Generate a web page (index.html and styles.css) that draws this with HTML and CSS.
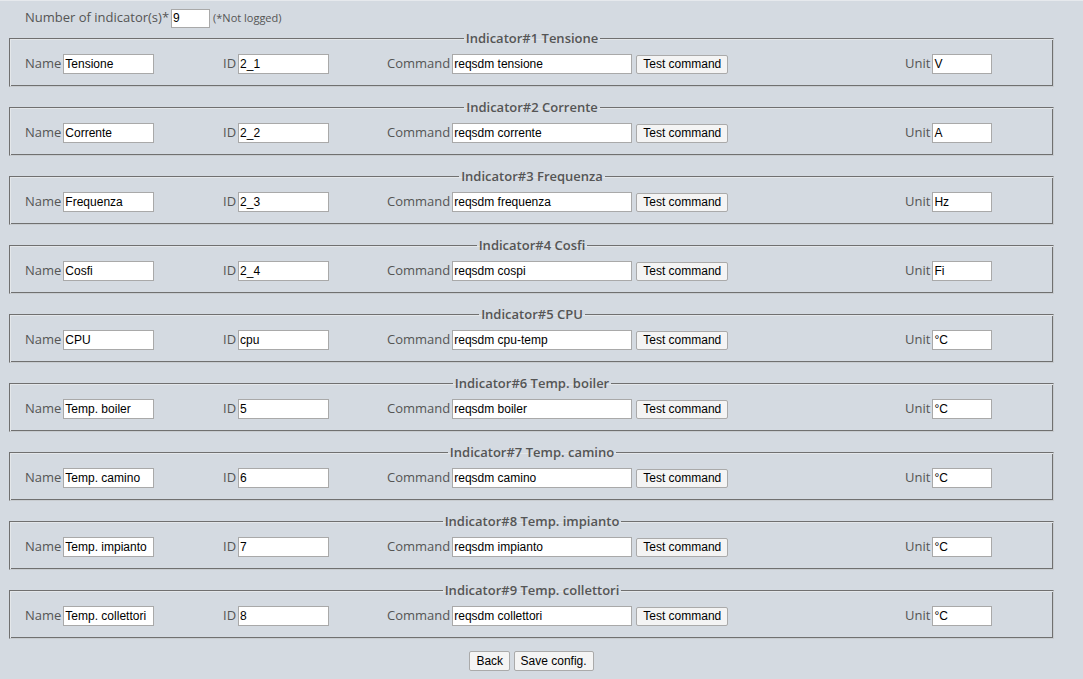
FILE: index.html
```html
<!DOCTYPE html>
<html lang="en">

<head>
  <meta charset="UTF-8">
  <title>Indicators</title>
  <link rel="stylesheet" href="styles.css">
</head>

<body>
  <div class="page">
    <div class="count-row">
      <label>Number of indicator(s)*</label>
      <input type="text" class="count-input" value="9">
      <span class="note">(*Not logged)</span>
    </div>

    <fieldset class="indicator">
      <legend>Indicator#1 Tensione</legend>
      <div class="fields">
        <div class="cell"><label>Name</label><input type="text" class="name-input" value="Tensione"></div>
        <div class="cell"><label>ID</label><input type="text" class="id-input" value="2_1"></div>
        <div class="cell"><label>Command</label><input type="text" class="cmd-input" value="reqsdm tensione"><button type="button" class="test-btn">Test command</button></div>
        <div class="cell"><label>Unit</label><input type="text" class="unit-input" value="V"></div>
      </div>
    </fieldset>

    <fieldset class="indicator">
      <legend>Indicator#2 Corrente</legend>
      <div class="fields">
        <div class="cell"><label>Name</label><input type="text" class="name-input" value="Corrente"></div>
        <div class="cell"><label>ID</label><input type="text" class="id-input" value="2_2"></div>
        <div class="cell"><label>Command</label><input type="text" class="cmd-input" value="reqsdm corrente"><button type="button" class="test-btn">Test command</button></div>
        <div class="cell"><label>Unit</label><input type="text" class="unit-input" value="A"></div>
      </div>
    </fieldset>

    <fieldset class="indicator">
      <legend>Indicator#3 Frequenza</legend>
      <div class="fields">
        <div class="cell"><label>Name</label><input type="text" class="name-input" value="Frequenza"></div>
        <div class="cell"><label>ID</label><input type="text" class="id-input" value="2_3"></div>
        <div class="cell"><label>Command</label><input type="text" class="cmd-input" value="reqsdm frequenza"><button type="button" class="test-btn">Test command</button></div>
        <div class="cell"><label>Unit</label><input type="text" class="unit-input" value="Hz"></div>
      </div>
    </fieldset>

    <fieldset class="indicator">
      <legend>Indicator#4 Cosfi</legend>
      <div class="fields">
        <div class="cell"><label>Name</label><input type="text" class="name-input" value="Cosfi"></div>
        <div class="cell"><label>ID</label><input type="text" class="id-input" value="2_4"></div>
        <div class="cell"><label>Command</label><input type="text" class="cmd-input" value="reqsdm cospi"><button type="button" class="test-btn">Test command</button></div>
        <div class="cell"><label>Unit</label><input type="text" class="unit-input" value="Fi"></div>
      </div>
    </fieldset>

    <fieldset class="indicator">
      <legend>Indicator#5 CPU</legend>
      <div class="fields">
        <div class="cell"><label>Name</label><input type="text" class="name-input" value="CPU"></div>
        <div class="cell"><label>ID</label><input type="text" class="id-input" value="cpu"></div>
        <div class="cell"><label>Command</label><input type="text" class="cmd-input" value="reqsdm cpu-temp"><button type="button" class="test-btn">Test command</button></div>
        <div class="cell"><label>Unit</label><input type="text" class="unit-input" value="°C"></div>
      </div>
    </fieldset>

    <fieldset class="indicator">
      <legend>Indicator#6 Temp. boiler</legend>
      <div class="fields">
        <div class="cell"><label>Name</label><input type="text" class="name-input" value="Temp. boiler"></div>
        <div class="cell"><label>ID</label><input type="text" class="id-input" value="5"></div>
        <div class="cell"><label>Command</label><input type="text" class="cmd-input" value="reqsdm boiler"><button type="button" class="test-btn">Test command</button></div>
        <div class="cell"><label>Unit</label><input type="text" class="unit-input" value="°C"></div>
      </div>
    </fieldset>

    <fieldset class="indicator">
      <legend>Indicator#7 Temp. camino</legend>
      <div class="fields">
        <div class="cell"><label>Name</label><input type="text" class="name-input" value="Temp. camino"></div>
        <div class="cell"><label>ID</label><input type="text" class="id-input" value="6"></div>
        <div class="cell"><label>Command</label><input type="text" class="cmd-input" value="reqsdm camino"><button type="button" class="test-btn">Test command</button></div>
        <div class="cell"><label>Unit</label><input type="text" class="unit-input" value="°C"></div>
      </div>
    </fieldset>

    <fieldset class="indicator">
      <legend>Indicator#8 Temp. impianto</legend>
      <div class="fields">
        <div class="cell"><label>Name</label><input type="text" class="name-input" value="Temp. impianto"></div>
        <div class="cell"><label>ID</label><input type="text" class="id-input" value="7"></div>
        <div class="cell"><label>Command</label><input type="text" class="cmd-input" value="reqsdm impianto"><button type="button" class="test-btn">Test command</button></div>
        <div class="cell"><label>Unit</label><input type="text" class="unit-input" value="°C"></div>
      </div>
    </fieldset>

    <fieldset class="indicator">
      <legend>Indicator#9 Temp. collettori</legend>
      <div class="fields">
        <div class="cell"><label>Name</label><input type="text" class="name-input" value="Temp. collettori"></div>
        <div class="cell"><label>ID</label><input type="text" class="id-input" value="8"></div>
        <div class="cell"><label>Command</label><input type="text" class="cmd-input" value="reqsdm collettori"><button type="button" class="test-btn">Test command</button></div>
        <div class="cell"><label>Unit</label><input type="text" class="unit-input" value="°C"></div>
      </div>
    </fieldset>

    <div class="actions">
      <button type="button">Back</button>
      <button type="button">Save config.</button>
    </div>
  </div>
</body>

</html>
```

FILE: styles.css
```css
html,
body {
  margin: 0;
  padding: 0;
  background-color: #d4dae1;
}

body {
  border-top: 1px solid #e6e9ed;
  font-family: "Open Sans", sans-serif;
  font-size: 13px;
  color: #555;
  height: 678px;
  overflow: hidden;
}

.page {
  width: 1045px;
  padding: 7px 0 0 9px;
}

label {
  color: #555;
}

input[type="text"] {
  font-family: "Liberation Sans", Arial, sans-serif;
  font-size: 12px;
  color: #000;
  background-color: white;
  border: 1px solid #a9a9a9;
  padding: 1px 1px;
  height: 20px;
  box-sizing: border-box;
  margin: 0;
}

button {
  font-family: "Liberation Sans", Arial, sans-serif;
  font-size: 12px;
  color: #000;
  background-color: #f4f4f4;
  border: 1px solid #aaa;
  border-radius: 2px;
  height: 19px;
  padding: 0 4px;
  margin: 0;
  white-space: nowrap;
}

.count-row {
  display: flex;
  align-items: baseline;
  gap: 2px;
  padding-left: 16px;
  height: 19px;
}

.count-input {
  width: 39px;
  height: 19px !important;
}

.note {
  font-size: 11px;
  color: #555;
  margin-left: 1px;
}

.indicator {
  margin: 2px 0 11px 0;
  padding: 6px 14px 11px 15px;
  border: 1px solid;
  border-color: #707070 #c8ccd0 #c8ccd0 #707070;
  box-shadow: inset 1px 1px 0 #e4e7ea, inset -1px -1px 0 #707070;
}

.indicator legend {
  margin: 0 auto;
  padding: 0 2px;
  font-weight: 600;
  color: #555;
  line-height: 18px;
}

.fields {
  display: grid;
  grid-template-columns: 198px 164px 518px auto;
  align-items: center;
  height: 22px;
}

.cell {
  display: flex;
  align-items: baseline;
  gap: 2px;
}

.test-btn {
  margin-left: 2px;
  width: 92px;
}

.name-input {
  width: 91px;
}

.id-input {
  width: 91px;
}

.cmd-input {
  width: 180px;
}

.unit-input {
  width: 60px;
}

.actions {
  text-align: center;
  padding-top: 1px;
}

.actions button {
  height: 20px;
  padding: 0 6px;
}
```
